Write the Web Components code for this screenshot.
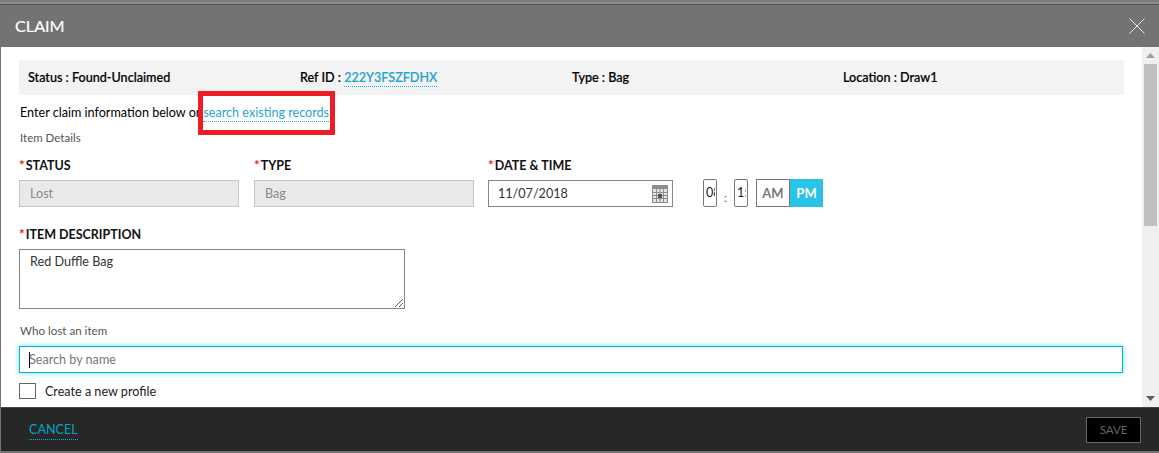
<!DOCTYPE html>
<html>
<head>
<meta charset="utf-8">
<title>Claim</title>
<style>
html, body { margin: 0; height: 453px; overflow: hidden; background: #737373; }
body { font-family: Lato, "Liberation Sans", sans-serif; }
</style>
</head>
<body>
<claim-modal>
  <summary-bar slot="summary"></summary-bar>
  <claim-form slot="form"></claim-form>
</claim-modal>

<script>
class ClaimModal extends HTMLElement {
    constructor() {
        super();
        this.attachShadow({ mode: 'open' });
        this.shadowRoot.innerHTML = `
            <style>
                :host { display: flex; flex-direction: column; height: 453px; background: #737373; color: #000; }
                .strip { height: 5px; box-sizing: border-box; background: #8b8b8b; border-top: 2px solid #7d7d7d; border-bottom: 1px solid #555; }
                header { height: 42px; display: flex; align-items: center; justify-content: space-between; padding: 0 14px 0 15px; color: #fff; font-size: 16.200px; -webkit-text-stroke: .2px #fff; }
                header span { margin-bottom: 2px; }
                header svg { display: block; }
                main { height: 360px; display: flex; background: #fff; margin-left: 1px; }
                .content { flex: 1; padding: 13px 18px 0 18px; min-width: 0; overflow: hidden; }
                .scroll { width: 17px; background: #f0f0f0; display: flex; flex-direction: column; align-items: center; justify-content: space-between; }
                .thumb { width: 13px; height: 162px; background: #c0c0c0; }
                .top { display: flex; flex-direction: column; align-items: center; }
                .arrow { height: 17px; display: flex; align-items: center; }
                footer { height: 45px; box-sizing: border-box; background: #272727; border-top: 1px solid #444; border-bottom: 1px solid #737373; display: flex; align-items: center; justify-content: space-between; padding: 0 18px 0 28px; margin-left: 1px; }
                .cancel { color: #00a3c7; font-size: 12.600px; border-bottom: 1px dotted #00b5dc; line-height: 15px; padding-bottom: 2px; margin-top: 2px; }
                .save { width: 55px; height: 26px; box-sizing: border-box; border: 1px solid #666; background: #000; color: #666; font-size: 11.500px; display: flex; align-items: center; justify-content: center; }
            </style>
            <div class="strip"></div>
            <header>
                <span>CLAIM</span>
                <svg width="16" height="16" viewBox="0 0 16 16"><path d="M.5.5l15 15M15.500.5l-15 15" stroke="#e8e8e8" stroke-width="1" fill="none"/></svg>
            </header>
            <main>
                <div class="content"><slot name="summary"></slot><slot name="form"></slot></div>
                <div class="scroll">
                    <div class="top">
                        <div class="arrow"><svg width="9" height="5"><path d="M4.500 0L9 5H0z" fill="#a0a0a0"/></svg></div>
                        <div class="thumb"></div>
                    </div>
                    <div class="arrow"><svg width="9" height="5"><path d="M0 0h9L4.500 5z" fill="#606060"/></svg></div>
                </div>
            </main>
            <footer><span class="cancel">CANCEL</span><span class="save">SAVE</span></footer>
        `;
    }
}

class SummaryBar extends HTMLElement {
    constructor() {
        super();
        this.attachShadow({ mode: 'open' });
        this.shadowRoot.innerHTML = `
            <style>
                :host { display: grid; grid-template-columns: 272px 272px 271px 1fr; height: 35px; align-items: center; padding-left: 9px; background: #f3f3f3; font-size: 12.600px; font-weight: 500; -webkit-text-stroke: .2px #000; }
                a { color: #1ea5cf; border-bottom: 1px dotted #1cb4dc; -webkit-text-stroke: .2px #1ea5cf; padding-bottom: 1px; }
            </style>
            <span>Status : Found-Unclaimed</span>
            <span>Ref ID : <a>222Y3FSZFDHX</a></span>
            <span>Type : Bag</span>
            <span>Location : Draw1</span>
        `;
    }
}

class ClaimForm extends HTMLElement {
    constructor() {
        super();
        this.attachShadow({ mode: 'open' });
        this.shadowRoot.innerHTML = `
            <style>
                :host { display: block; font-size: 12.600px; color: #000; }
                .intro { position: relative; margin-top: 10px; height: 16px; line-height: 16px; padding-left: 1px; }
                .intro a { color: #28a6d4; border-bottom: 1px dotted #1cb4dc; padding-bottom: 1px; }
                .mark { position: absolute; left: 179px; top: -14px; width: 127px; height: 34px; border: 5px solid #ee1c25; }
                .sub { font-size: 11.500px; color: #555; line-height: 14px; margin-top: 10px; padding-left: 1px; }
                .row { display: flex; margin-top: 12px; align-items: flex-start; }
                label { display: block; font-size: 12.500px; font-weight: 700; line-height: 16px; color: #111; margin-bottom: 6px; }
                label i { color: #ee1c25; font-style: normal; font-weight: 700; font-size: 13.500px; margin-right: 1px; }
                .f { margin-right: 15px; }
                .f.last { margin-right: 0; margin-left: -1px; }
                .box { box-sizing: border-box; width: 220px; height: 27px; display: flex; align-items: center; padding-left: 10px; background: #e9e9e9; border: 1px solid #c6c6c6; color: #8a8a8a; }
                .date { width: 185px; background: #fff; border-color: #858585; color: #333; justify-content: space-between; padding: 0 4px 0 9px; }
                .time { display: flex; align-items: flex-start; height: 28px; margin: 22px 0 0 30px; }
                .num { box-sizing: border-box; width: 14px; height: 28px; border: 1px solid #777; border-radius: 2px; line-height: 26px; padding-left: 2px; color: #222; }
                .num span { display: block; width: 8.500px; overflow: hidden; white-space: nowrap; }
                .colon { width: 17px; text-align: center; color: #555; font-size: 11px; padding-top: 12px; box-sizing: border-box; }
                .ampm { display: flex; margin-left: 8px; }
                .ampm span { box-sizing: border-box; height: 28px; display: flex; align-items: center; justify-content: center; font-weight: 700; font-size: 13px; }
                .am { width: 34px; border: 1px solid #777; color: #777; }
                .pm { width: 33px; background: #29c3e6; color: #fff; }
                .desc { box-sizing: border-box; position: relative; width: 386px; height: 60px; border: 1px solid #858585; padding: 3px 10px; line-height: 18px; color: #333; }
                .desc svg { position: absolute; right: 0; bottom: 0; }
                .who { font-size: 11.600px; color: #555; line-height: 14px; margin-top: 15px; padding-left: 1px; }
                .search { box-sizing: border-box; height: 27px; margin: 8px 1px 0 0; border: 1px solid #00b5d8; box-shadow: 0 0 5px #66d9ef; display: flex; align-items: center; padding-left: 9px; color: #777; }
                .caret { width: 1px; height: 16px; background: #000; margin-right: -1px; }
                .check { display: flex; align-items: center; margin-top: 10px; color: #222; }
                .check b { box-sizing: border-box; width: 17px; height: 16px; border: 1px solid #666; margin-right: 9px; }
            </style>
            <div class="intro">Enter claim information below or <a>search existing records</a><div class="mark"></div></div>
            <div class="sub">Item Details</div>
            <div class="row">
                <div class="f"><label><i>*</i>STATUS</label><div class="box">Lost</div></div>
                <div class="f"><label><i>*</i>TYPE</label><div class="box">Bag</div></div>
                <div class="f last"><label><i>*</i>DATE &amp; TIME</label>
                    <div class="box date">11/07/2018
                        <svg width="16" height="18" viewBox="0 0 16 18">
                            <rect width="16" height="18" fill="#8c8c8c"/>
                            <path d="M1 4h14v13H1z" fill="#e4e4e4"/>
                            <path d="M1 7.500h14M1 10.500h14M1 13.500h14M4.500 4v13M8 4v13M11.500 4v13" stroke="#8c8c8c"/>
                            <rect x="6" y="9" width="4" height="4" fill="#555"/>
                        </svg>
                    </div>
                </div>
                <div class="time">
                    <div class="num"><span>08</span></div><div class="colon">:</div><div class="num"><span>15</span></div>
                    <div class="ampm"><span class="am">AM</span><span class="pm">PM</span></div>
                </div>
            </div>
            <label style="margin-top:19px"><i>*</i>ITEM DESCRIPTION</label>
            <div class="desc">Red Duffle Bag
                <svg width="10" height="10"><path d="M1 9l8-8M5 9l4-4" stroke="#555" fill="none"/></svg>
            </div>
            <div class="who">Who lost an item</div>
            <div class="search"><span class="caret"></span>Search by name</div>
            <div class="check"><b></b>Create a new profile</div>
        `;
    }
}

customElements.define('claim-modal', ClaimModal);
customElements.define('summary-bar', SummaryBar);
customElements.define('claim-form', ClaimForm);
</script>
</body>
</html>
